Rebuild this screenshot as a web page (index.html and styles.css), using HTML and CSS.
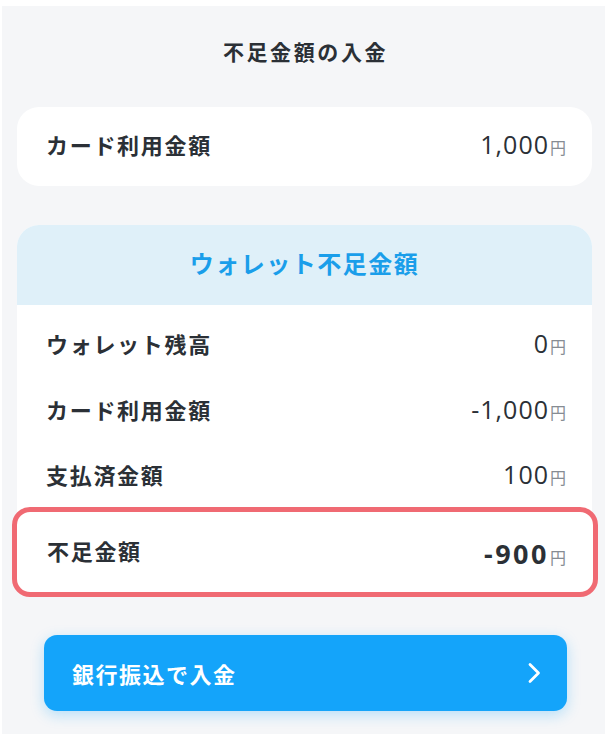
FILE: index.html
```html
<!DOCTYPE html>
<html lang="ja">
<head>
<meta charset="utf-8">
<link rel="stylesheet" href="styles.css">
</head>
<body>
<div class="page">
  <h1 class="title">不足金額の入金</h1>

  <div class="card simple">
    <div class="row">
      <span class="label">カード利用金額</span>
      <span class="amount"><span class="num">1,000</span><span class="yen">円</span></span>
    </div>
  </div>

  <div class="card wallet">
    <div class="card-head">ウォレット不足金額</div>
    <div class="rows">
      <div class="row">
        <span class="label">ウォレット残高</span>
        <span class="amount"><span class="num">0</span><span class="yen">円</span></span>
      </div>
      <div class="row">
        <span class="label">カード利用金額</span>
        <span class="amount"><span class="num">-1,000</span><span class="yen">円</span></span>
      </div>
      <div class="row">
        <span class="label">支払済金額</span>
        <span class="amount"><span class="num">100</span><span class="yen">円</span></span>
      </div>
      <div class="row total">
        <span class="label">不足金額</span>
        <span class="amount"><span class="num strong">-900</span><span class="yen">円</span></span>
      </div>
    </div>
  </div>

  <button class="cta" type="button">
    <span>銀行振込で入金</span>
    <svg class="chev" width="16" height="26" viewBox="0 0 16 26" aria-hidden="true"><path d="M4 4.5 L12.5 13 L4 21.5" fill="none" stroke="#fff" stroke-width="2.8" stroke-linecap="round" stroke-linejoin="round"/></svg>
  </button>
</div>
</body>
</html>
```

FILE: styles.css
```css
* { box-sizing: border-box; }
html, body { background: #ffffff; }
body {
  margin: 6px 0 0 2px;
  font-family: "Noto Sans CJK JP", "Noto Sans", sans-serif;
  color: #2b3036;
}
.page {
  background: #f5f6f8;
  min-height: 728px;
  padding: 30px 13px 22px 15px;
  display: flex;
  flex-direction: column;
}
.title {
  margin: 0 0 1px;
  font-size: 21px;
  line-height: 30px;
  font-weight: 700;
  letter-spacing: 2.6px;
  text-align: center;
  color: #2b3036;
  padding-left: 2px;
}
.card {
  background: #ffffff;
  border-radius: 22px;
}
.simple {
  margin-top: 40px;
  height: 79px;
  display: flex;
  align-items: center;
}
.simple .row { width: 100%; }
.row {
  height: 65.5px;
  padding: 0 26px 5px 29px;
  display: flex;
  align-items: center;
  justify-content: space-between;
}
.label {
  font-size: 22px;
  font-weight: 700;
  letter-spacing: 1.7px;
  color: #2b3036;
}
.amount {
  display: flex;
  align-items: baseline;
}
.num {
  font-family: "Open Sans", "Noto Sans", sans-serif;
  font-size: 25px;
  font-weight: 400;
  color: #2b3036;
  letter-spacing: 1px;
}
.num.strong {
  font-weight: 700;
  font-size: 27px;
  letter-spacing: 2.5px;
}
.yen {
  font-size: 16px;
  color: #868c93;
  margin-left: 1px;
}
.wallet {
  margin-top: 39px;
}
.card-head {
  height: 80px;
  padding-bottom: 5px;
  border-radius: 22px 22px 0 0;
  background: #dff0f9;
  color: #1a9eea;
  font-size: 24px;
  font-weight: 700;
  letter-spacing: 1.5px;
  display: flex;
  align-items: center;
  justify-content: center;
}
.rows {
  padding-top: 8px;
}
.row.total {
  height: 90px;
  margin: -3px -6px 0 -5px;
  padding: 0 27px 3px 30px;
  border: 5px solid #f06a73;
  border-radius: 18px;
  background: #ffffff;
}
.row.total .amount { margin-top: 6px; }
.cta {
  margin: 38px 25px 0 27px;
  height: 76px;
  border: none;
  border-radius: 13px;
  background: #14a4fa;
  box-shadow: 0 4px 14px rgba(20, 164, 250, 0.28);
  color: #ffffff;
  font-family: "Noto Sans CJK JP", sans-serif;
  font-size: 22px;
  font-weight: 700;
  letter-spacing: 1.5px;
  display: flex;
  align-items: center;
  justify-content: space-between;
  padding: 0 25px 0 28px;
}
.chev { display: block; }
```
